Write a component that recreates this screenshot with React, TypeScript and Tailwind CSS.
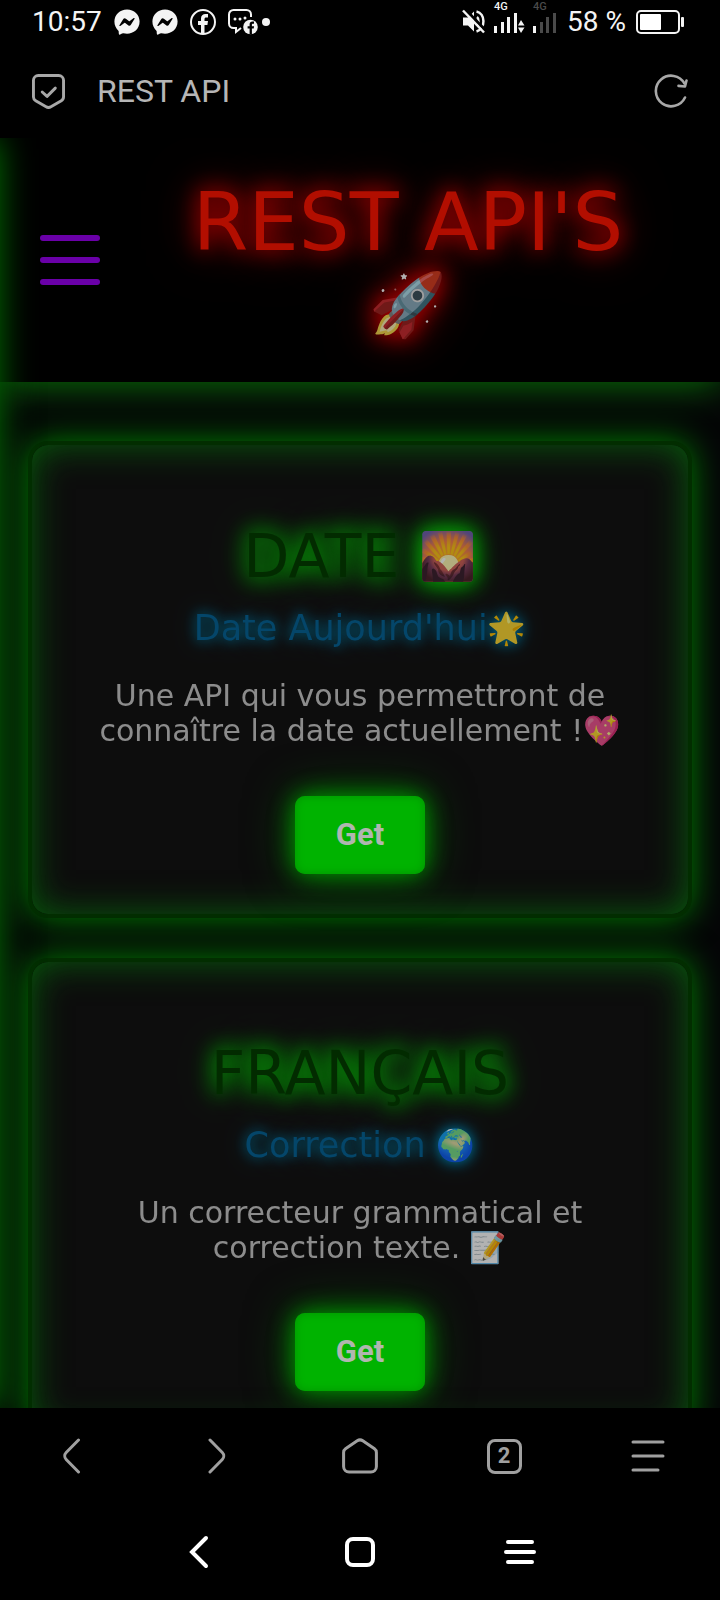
import React from "react";
import { FaFacebookMessenger } from "react-icons/fa";

function StatusBar() {
  return (
    <div className="flex h-11 shrink-0 items-center justify-between pr-9 pl-8 text-[28px] text-[#f4f4f4]">
      <div className="flex items-center gap-3">
        <span>10:57</span>
        <FaFacebookMessenger size={26} />
        <FaFacebookMessenger size={26} />
        <svg width="26" height="26" viewBox="0 0 26 26" fill="none">
          <circle cx="13" cy="13" r="12" stroke="currentColor" strokeWidth="2" />
          <path d="M11 25v-9H8v-4h3V9.500c0-3 1.800-4.500 4.500-4.500H18v3.500h-1.800c-1.200 0-1.700.6-1.700 1.700V12H18l-.6 4h-2.900v9z" fill="currentColor" />
        </svg>
        <div className="flex items-center gap-1">
          <svg width="30" height="26" viewBox="0 0 30 26" fill="none">
            <path d="M13 19l-5 4v-4H5.500A4.500 4.500 0 0 1 1 14.500v-9A4.500 4.500 0 0 1 5.500 1h13A4.500 4.500 0 0 1 23 5.500V8" stroke="currentColor" strokeWidth="2" />
            <g fill="currentColor">
              <circle cx="7" cy="10" r="1.500" />
              <circle cx="12" cy="10" r="1.500" />
              <circle cx="17" cy="9" r="1.500" />
              <circle cx="22.500" cy="18" r="7.300" />
            </g>
            <path d="M21.600 25.500V19.500h-2v-2.300h2v-1.700c0-2 1.200-2.900 2.800-2.900h1.600v2.200h-1c-.8 0-1.100.4-1.100 1v1.400h2.200l-.4 2.300h-1.800v6z" fill="#000" />
          </svg>
          <span className="size-2 rounded-full bg-[#f4f4f4]" />
        </div>
      </div>
      <div className="flex items-center gap-2">
        <svg width="24" height="26" viewBox="0 0 24 26" fill="none">
          <path d="M1 8.500h5l6-6v20l-6-6H1z" fill="currentColor" />
          <path d="M15 8c2 1.500 2 7.500 0 9M14.500 2.500c9 2 9.500 17 0 20" stroke="currentColor" strokeWidth="2.500" />
          <path d="M3 0l21 22" stroke="#000" strokeWidth="3" />
          <path d="M1 1.500l21 22" stroke="currentColor" strokeWidth="2.500" />
        </svg>
        <Signal active />
        <Signal />
        <span className="px-0.5">58 %</span>
        <svg width="48" height="24" viewBox="0 0 48 24" fill="none">
          <rect x="1" y="1" width="42" height="22" rx="4" stroke="currentColor" strokeWidth="2" />
          <rect x="4" y="4" width="21" height="16" rx="1" fill="#fff" />
          <rect x="45" y="7" width="3" height="10" rx="1" fill="currentColor" />
        </svg>
      </div>
    </div>
  );
}

function Signal({ active = false }: { active?: boolean }) {
  const rest = active ? "#f4f4f4" : "#4a4a4a";
  return (
    <div className={active ? "flex flex-col pb-2 text-[#f4f4f4]" : "flex flex-col pb-2 text-[#4a4a4a]"}>
      <span className="h-2 text-[11px] leading-2 font-medium">4G</span>
      <svg width={active ? 31 : 24} height="22" viewBox={active ? "0 0 31 22" : "0 0 24 22"}>
        <rect x="0" y="15" width="3" height="7" fill="#f4f4f4" />
        <rect x="7" y="11" width="3" height="11" fill={rest} />
        <rect x="13" y="6" width="3" height="16" fill={rest} />
        <rect x="20" y="2" width="3" height="20" fill={rest} />
        {active && <path d="M24 14.500L27 9l3.500 5.500zM24 16.500h6.500L27 22z" fill="#f4f4f4" />}
      </svg>
    </div>
  );
}

function AddressBar() {
  return (
    <div className="flex h-[94px] shrink-0 items-center px-8 text-[#a8a8a8]">
      <svg width="33" height="35" viewBox="0 0 34 36" fill="none" stroke="currentColor" strokeWidth="3" strokeLinejoin="round" strokeLinecap="round">
        <path d="M6.500 1.500h21a5 5 0 0 1 5 5v17c0 1.800-.8 3.200-2.300 4.100l-10.700 6.200a5 5 0 0 1-5 0L3.800 27.600A4.700 4.700 0 0 1 1.500 23.500v-17a5 5 0 0 1 5-5z" />
        <path d="M10.500 18.500l5 4.500 8.500-8.500" />
      </svg>
      <span className="ml-8 flex-1 text-[32px] text-[#b6b6b6]">REST API</span>
      <button type="button" aria-label="Reload">
        <svg width="34" height="34" viewBox="0 0 34 34" fill="none" stroke="currentColor" strokeWidth="2.600" strokeLinecap="round" strokeLinejoin="round">
          <path d="M31 23.500A15.300 15.300 0 1 1 30.500 9.500" />
          <path d="M32.500 6.500L31 12.500l-6.500-.6" />
        </svg>
      </button>
    </div>
  );
}

function Header() {
  return (
    <header className="relative flex items-center bg-black pt-11 pr-1 pb-9 pl-10 shadow-[0_0_38px_#0a8008]">
      <button type="button" aria-label="Menu" className="-mt-2 flex w-[60px] flex-col gap-4">
        <span className="h-1.5 rounded-full bg-[#6a00a8]" />
        <span className="h-1.5 rounded-full bg-[#6a00a8]" />
        <span className="h-1.5 rounded-full bg-[#6a00a8]" />
      </button>
      <h1 className="flex flex-1 flex-col items-center text-[80px] leading-[82px] text-[#fe1400] brightness-70 [text-shadow:0_0_20px_#e00000,0_0_28px_#b00000,0_0_50px_#900000]">
        <span>REST API'S</span>
        <span className="text-[62px]">🚀</span>
      </h1>
    </header>
  );
}

type CardProps = { title: string; emoji?: string; sub: string; subEmoji: string; text: string };

function Card({ title, emoji, sub, subEmoji, text }: CardProps) {
  return (
    <article className="flex flex-col items-center rounded-[20px] border-4 border-[#022d00] bg-[#0d0d0d] px-12 pt-[81px] pb-10 text-center shadow-[0_0_34px_#008000,inset_0_0_36px_#085c0c]">
      <h2 className="flex h-[60px] items-center gap-5 text-[60px] leading-[60px] text-[#033d00] brightness-70 [text-shadow:0_0_20px_#0acd0a,0_0_24px_#0acd0a,0_0_36px_#006c00]">
        <span>{title}</span>
        {emoji && <span className="text-[46px]">{emoji}</span>}
      </h2>
      <h3 className="mt-5 flex h-11 items-center text-[35px] leading-[44px] whitespace-pre text-[#066497] brightness-70 [text-shadow:0_0_12px_#008ab8,0_0_20px_#006789]">
        <span>{sub}</span>
        <span className="text-[31px]">{subEmoji}</span>
      </h3>
      <p className="mt-7 text-[30px] leading-[35px] text-[#c8c8c8] brightness-70">{text}</p>
      <button
        type="button"
        className="mt-12 h-[78px] w-[130px] rounded-[10px] bg-[#00b300] font-[Roboto,sans-serif] text-[31px] font-bold text-[#b0b6b0] shadow-[0_0_24px_#00a000,0_0_48px_#005000,inset_0_0_10px_#009400]"
      >
        Get
      </button>
    </article>
  );
}

function BrowserNav() {
  const cell = "flex items-center justify-center";
  const line = { fill: "none", stroke: "currentColor", strokeWidth: 3, strokeLinecap: "round", strokeLinejoin: "round" } as const;
  return (
    <nav className="grid h-24 shrink-0 grid-cols-5 text-[#a0a0a0]">
      <button type="button" aria-label="Back" className={cell}>
        <svg width="36" height="36" viewBox="0 0 36 36" {...line}>
          <path d="M24.500 2L12.200 14.500a5 5 0 0 0 0 7L24.500 34" />
        </svg>
      </button>
      <button type="button" aria-label="Forward" className={cell}>
        <svg width="36" height="36" viewBox="0 0 36 36" {...line}>
          <path d="M12 2l12.300 12.500a5 5 0 0 1 0 7L12 34" />
        </svg>
      </button>
      <button type="button" aria-label="Home" className={cell}>
        <svg width="36" height="36" viewBox="0 0 36 36" {...line}>
          <path d="M15.200 2.800L3.500 10.800A4.500 4.500 0 0 0 1.600 14.500v14a5.500 5.500 0 0 0 5.500 5.500h21.800a5.500 5.500 0 0 0 5.500-5.500v-14a4.500 4.500 0 0 0-1.900-3.700L20.800 2.800a5 5 0 0 0-5.600 0z" />
        </svg>
      </button>
      <button type="button" aria-label="Tabs" className={cell}>
        <span className="flex size-[35px] items-center justify-center rounded-lg border-3 border-current text-[22px] leading-none font-bold">2</span>
      </button>
      <button type="button" aria-label="More" className={cell}>
        <svg width="36" height="36" viewBox="0 0 36 36" {...line}>
          <path d="M3 4h30M3 18h30M3 32h25" />
        </svg>
      </button>
    </nav>
  );
}

function SystemNav() {
  const cell = "flex items-center justify-center";
  return (
    <nav className="grid h-24 shrink-0 grid-cols-3 px-[120px] text-white">
      <button type="button" aria-label="System back" className={cell}>
        <svg width="32" height="34" viewBox="0 0 32 34" fill="none" stroke="currentColor" strokeWidth="4" strokeLinecap="round">
          <path d="M22 3L8 17l14 14" />
        </svg>
      </button>
      <button type="button" aria-label="System home" className={cell}>
        <span className="size-[30px] rounded-lg border-4 border-white" />
      </button>
      <button type="button" aria-label="Recent apps" className={cell}>
        <svg width="32" height="24" viewBox="0 0 32 24" stroke="currentColor" strokeWidth="4" strokeLinecap="round">
          <path d="M4 2h24M2 12h28M4 22h24" />
        </svg>
      </button>
    </nav>
  );
}

export default function App() {
  return (
    <div className="flex h-screen flex-col bg-black font-[Roboto,sans-serif]">
      <StatusBar />
      <AddressBar />
      <div className="relative min-h-0 flex-1 overflow-hidden bg-[#050507] font-['DejaVu_Sans','Noto_Color_Emoji',sans-serif]">
        <Header />
        <main className="flex flex-col gap-10 px-7 pt-[59px]">
          <Card
            title="DATE"
            emoji="🌄"
            sub="Date Aujourd'hui"
            subEmoji="🌟"
            text="Une API qui vous permettront de connaître la date actuellement !💖"
          />
          <Card title="FRANÇAIS" sub="Correction " subEmoji="🌍" text="Un correcteur grammatical et correction texte. 📝" />
        </main>
        <aside className="absolute inset-y-0 right-full w-72 shadow-[0_0_32px_#007000]" />
      </div>
      <BrowserNav />
      <SystemNav />
    </div>
  );
}
